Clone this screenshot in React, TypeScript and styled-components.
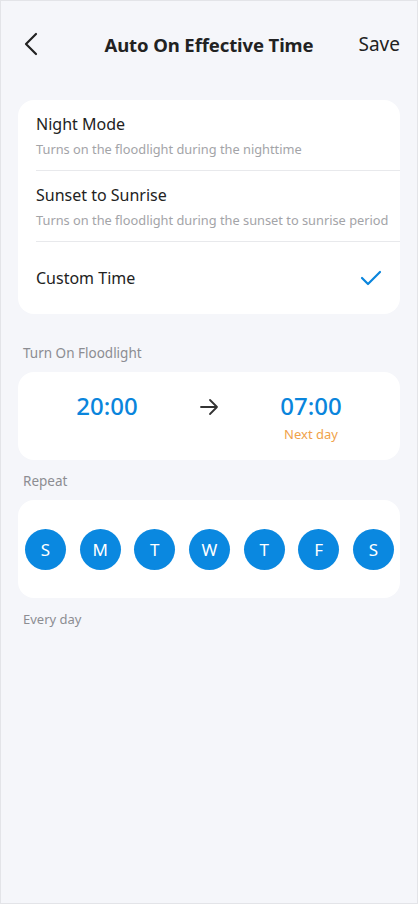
import React from 'react';
import styled, { createGlobalStyle } from 'styled-components';

const GlobalStyle = createGlobalStyle`
  html, body {
    margin: 0;
    padding: 0;
    background: #f5f6fa;
  }
  body {
    font-family: "Noto Sans", "Open Sans", sans-serif;
    color: #222222;
  }
`;

const Screen = styled.div`
  box-sizing: border-box;
  width: 418px;
  height: 904px;
  background: #f5f6fa;
  border: 1px solid #e3e4e8;
  padding: 0 17px;
  display: flex;
  flex-direction: column;
`;

const Header = styled.div`
  height: 86px;
  display: grid;
  grid-template-columns: 1fr auto 1fr;
  align-items: center;
`;

const BackButton = styled.div`
  display: flex;
  align-items: center;
  padding-left: 6px;
`;

const Title = styled.div`
  font-size: 18.5px;
  font-weight: 700;
  color: #222222;
  letter-spacing: -0.1px;
`;

const SaveButton = styled.div`
  font-size: 19px;
  color: #222222;
  justify-self: end;
`;

const Card = styled.div`
  background: #ffffff;
  border-radius: 16px;
`;

const OptionList = styled(Card)`
  margin-top: 13px;
  padding-left: 18px;
`;

const Option = styled.div<{ $last?: boolean }>`
  display: flex;
  align-items: center;
  justify-content: space-between;
  padding-right: 18px;
  border-bottom: ${(p) => (p.$last ? 'none' : '1px solid #e8e9ec')};
  height: ${(p) => (p.$last ? '72px' : '71px')};
  box-sizing: border-box;
`;

const OptionText = styled.div`
  display: flex;
  flex-direction: column;
  gap: 5px;
  padding-top: 1px;
`;

const OptionTitle = styled.div`
  font-size: 16px;
  color: #222222;
`;

const OptionDesc = styled.div`
  font-size: 12.8px;
  color: #a3a4a8;
  white-space: nowrap;
`;

const SectionLabel = styled.div<{ $gap: number }>`
  font-size: 13.5px;
  color: #8c8d92;
  padding: 0 5px;
  margin: ${(p) => p.$gap}px 0 10px;
`;

const TimeCard = styled(Card)`
  height: 88px;
  display: grid;
  grid-template-columns: 1fr 40px 1fr;
  align-items: start;
  padding: 20px 7px 0;
  box-sizing: border-box;
`;

const TimeBlock = styled.div`
  display: flex;
  flex-direction: column;
  align-items: center;
`;

const TimeValue = styled.div`
  font-size: 24px;
  font-weight: 500;
  color: #0a85dc;
  line-height: 28px;
`;

const NextDay = styled.div`
  font-size: 13px;
  color: #f0a24a;
  margin-top: 5px;
`;

const ArrowWrap = styled.div`
  display: flex;
  justify-content: center;
  padding-top: 6px;
`;

const DaysCard = styled(Card)`
  height: 98px;
  display: flex;
  align-items: center;
  justify-content: space-between;
  padding: 0 6px 0 7px;
  box-sizing: border-box;
`;

const Day = styled.div`
  width: 41px;
  height: 41px;
  border-radius: 50%;
  background: #0a88e0;
  color: #ffffff;
  font-size: 17px;
  display: flex;
  align-items: center;
  justify-content: center;
`;

const Footnote = styled.div`
  font-size: 13px;
  color: #8c8d92;
  padding: 0 5px;
  margin-top: 12px;
`;

const days = ['S', 'M', 'T', 'W', 'T', 'F', 'S'];

export default function App() {
  return (
    <>
      <GlobalStyle />
      <Screen>
        <Header>
          <BackButton>
            <svg width="14" height="24" viewBox="0 0 14 24" fill="none">
              <path d="M12 2 L2 12 L12 22" stroke="#222" strokeWidth="2.2" strokeLinecap="round" strokeLinejoin="round" />
            </svg>
          </BackButton>
          <Title>Auto On Effective Time</Title>
          <SaveButton>Save</SaveButton>
        </Header>

        <OptionList>
          <Option>
            <OptionText>
              <OptionTitle>Night Mode</OptionTitle>
              <OptionDesc>Turns on the floodlight during the nighttime</OptionDesc>
            </OptionText>
          </Option>
          <Option>
            <OptionText>
              <OptionTitle>Sunset to Sunrise</OptionTitle>
              <OptionDesc>Turns on the floodlight during the sunset to sunrise period</OptionDesc>
            </OptionText>
          </Option>
          <Option $last>
            <OptionTitle>Custom Time</OptionTitle>
            <svg width="22" height="16" viewBox="0 0 22 16" fill="none">
              <path d="M2 8 L8 14 L20 2" stroke="#0a85dc" strokeWidth="2.2" strokeLinecap="round" strokeLinejoin="round" />
            </svg>
          </Option>
        </OptionList>

        <SectionLabel $gap={30}>Turn On Floodlight</SectionLabel>
        <TimeCard>
          <TimeBlock>
            <TimeValue>20:00</TimeValue>
          </TimeBlock>
          <ArrowWrap>
            <svg width="20" height="18" viewBox="0 0 20 18" fill="none">
              <path d="M2 9 H18 M11 2 L18 9 L11 16" stroke="#333" strokeWidth="1.8" strokeLinecap="round" strokeLinejoin="round" />
            </svg>
          </ArrowWrap>
          <TimeBlock>
            <TimeValue>07:00</TimeValue>
            <NextDay>Next day</NextDay>
          </TimeBlock>
        </TimeCard>

        <SectionLabel $gap={12}>Repeat</SectionLabel>
        <DaysCard>
          {days.map((d, i) => (
            <Day key={i}>{d}</Day>
          ))}
        </DaysCard>
        <Footnote>Every day</Footnote>
      </Screen>
    </>
  );
}
